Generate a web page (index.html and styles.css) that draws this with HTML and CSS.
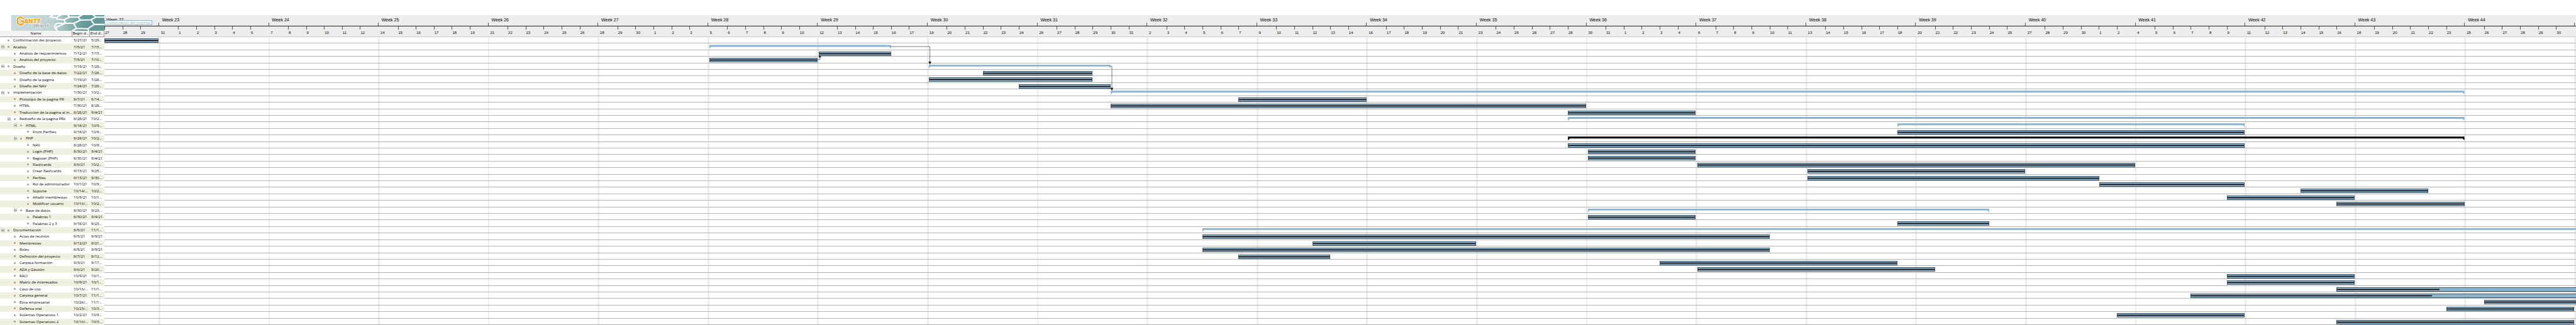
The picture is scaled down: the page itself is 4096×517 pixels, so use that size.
FILE: index.html
```html
<!DOCTYPE html>
<html lang="es">
<head>
<meta charset="utf-8">
<title>GanttProject</title>
<link rel="stylesheet" href="styles.css">
</head>
<body>
<main class="gantt">
  <section class="side">
    <svg class="logo" viewBox="0 0 283 47" preserveAspectRatio="none" role="img" aria-label="Gantt project">
      <defs>
        <linearGradient id="sea" x1="0" x2="1" y1="0" y2="0">
          <stop offset="0" stop-color="#c9dcdb"/>
          <stop offset="0.45" stop-color="#bdd3d2"/>
          <stop offset="0.78" stop-color="#669999"/>
          <stop offset="1" stop-color="#669999"/>
        </linearGradient>
      </defs>
      <rect width="283" height="47" fill="url(#sea)"/>
      <g fill="none" stroke="#fff" stroke-width="4" stroke-linejoin="round">
        <path d="M126 -1L118 6L138 8L142 4L152 -1M138 8V12L160 14L177 6L171 -1M177 6L203 6L216 -1M203 6L210 15L242 14L257 6L248 -1M257 6H284"/>
        <path d="M242 14L252 28H284M210 15L190 25L165 24L160 14M165 24L137 36L138 48M165 24L137 25L131 35L140 48M190 25L198 40L232 41L252 28M198 40L184 48M232 41L237 48"/>
      </g>
      <path d="M37 11L28 5L19 10V24L28 30L37 25V18H28" fill="none" stroke="#fff" stroke-width="7" stroke-linejoin="round"/>
      <path d="M37 11L28 5L19 10V24L28 30L37 25V18H28" fill="none" stroke="#ff9900" stroke-width="4" stroke-linejoin="round"/>
      <text class="logo-name" x="39" y="25">ANTT</text>
      <text class="logo-sub" x="69" y="35">project</text>
    </svg>
    <table class="tasks">
      <thead>
        <tr><th scope="col">Name</th><th scope="col">Begin d...</th><th scope="col">End d...</th></tr>
      </thead>
      <tbody id="task-rows"></tbody>
    </table>
  </section>
  <section class="chart">
    <header class="axis">
      <div class="weeks" id="weeks"></div>
      <div class="days" id="days"></div>
      <span class="tag">Conformación del proyecto</span>
    </header>
    <div class="plot">
      <div class="stripes" id="stripes"></div>
      <div class="bars" id="bars"></div>
      <svg class="links" viewBox="0 0 7551 880" preserveAspectRatio="none" aria-hidden="true">
        <path class="wire" d="M2403 29H2522V82M2179 69H2186V56M3074 89H3078V162"/>
        <path d="M2518 75H2526L2522 84ZM2182 62H2190L2186 56ZM3074 155H3082L3078 164Z"/>
      </svg>
    </div>
  </section>
</main>
<script src="gantt.js"></script>
</body>
</html>
```
FILE: styles.css
```css
* { box-sizing: border-box; }
body {
  margin: 0;
  background: #fff;
  color: #000;
  font-family: "Open Sans", "Noto Sans", sans-serif;
  font-size: 6px;
  line-height: 10px;
}
.gantt {
  display: grid;
  grid-template-columns: 166px 1fr;
  min-height: 100vh;
  padding-top: 24px;
}
.side, .chart {
  display: flex;
  flex-direction: column;
  min-width: 0;
}
.logo {
  display: block;
  width: 148px;
  height: 25px;
  margin-left: 18px;
}
.logo-name {
  font: bold 17px "DejaVu Sans", sans-serif;
  fill: #ff9900;
  stroke: #fff;
  stroke-width: 3px;
  paint-order: stroke;
}
.logo-sub {
  font: italic 16px "Liberation Serif", serif;
  fill: #666;
  stroke: #fff;
  stroke-width: 2px;
  paint-order: stroke;
}

.tasks {
  flex: 1;
  display: grid;
  grid-template-rows: 10px 1fr;
}
.tasks thead { display: grid; }
.tasks tbody {
  display: grid;
  grid-template-rows: repeat(44, 1fr);
}
.tasks tr {
  display: grid;
  grid-template-columns: 115px 28px 23px;
  align-items: center;
}
.tasks tbody tr:nth-child(even) { background: #eff0e0; }
.tasks th {
  padding: 0;
  height: 10px;
  line-height: 9px;
  background: #f3f3f3;
  border-right: 1px solid #999;
  border-bottom: 1px solid #999;
  font-weight: normal;
  white-space: nowrap;
}
.tasks td {
  padding: 0 0 0 2px;
  white-space: nowrap;
}
.tasks .name {
  display: flex;
  align-items: center;
}
.level-1 { margin-left: 10px; }
.level-2 { margin-left: 20px; }
.level-3 { margin-left: 31px; }
.toggle {
  width: 5px;
  height: 5px;
  margin-right: 5px;
  padding: 0;
  border: 1px solid #b4b4b4;
  background: linear-gradient(#fff 1px, #666 1px 2px, #fff 2px);
}
.toggle.leaf { visibility: hidden; }
.dot {
  width: 3px;
  height: 3px;
  margin-right: 6px;
  border-radius: 50%;
  background: #999;
}

.chart { overflow: hidden; }
.axis {
  position: relative;
  background: #ededed;
  border-bottom: 1px solid #ccc;
  font-family: "Liberation Sans", Arial, sans-serif;
}
.weeks, .days {
  display: flex;
  white-space: nowrap;
}
.weeks {
  height: 18px;
  border-bottom: 1px solid #222;
  font-size: 7px;
  line-height: 16px;
}
.days { height: 16px; }
.weeks > *, .days > *, .stripes > * { flex: none; }
.week { padding-left: 3px; }
.gap {
  height: 5px;
  align-self: flex-end;
  border-left: 1px solid #555;
}
.day {
  padding: 5px 0 0 1px;
  line-height: 10px;
  background: linear-gradient(#555, #555) left top / 1px 5px no-repeat;
}
.day.monday { background: none; }
.tag {
  position: absolute;
  left: 0;
  top: 8px;
  height: 8px;
  padding: 0 1px;
  border: 1px solid #8ab4cf;
  background: #fff;
  color: #8ab4cf;
  line-height: 6px;
  white-space: nowrap;
}

.plot {
  position: relative;
  flex: 1;
  display: grid;
}
.stripes, .links {
  position: absolute;
  inset: 0;
  width: 100%;
  height: 100%;
}
.stripes { display: flex; }
.sunday { background: #ededed; }
.bars {
  position: relative;
  display: grid;
  grid-template-rows: repeat(44, 1fr);
}
.row {
  padding-top: 2px;
  border-bottom: 1px solid #b4b4b4;
}
.bar {
  height: 7px;
  border: 1px solid #425663;
  background: #8ab4cf;
}
.done {
  height: 5px;
  background: linear-gradient(#8ab4cf 1px, #5c7889 1px 2px, #000 2px 3px, #5c7889 3px 4px, #8ab4cf 4px);
}
.summary {
  height: 6px;
  background: #8ab4cf;
  clip-path: polygon(0 0, 100% 0, 100% 100%, calc(100% - 3px) 50%, 3px 50%, 0 100%);
}
.summary.critical { background: #000; }
.wire {
  fill: none;
  stroke: #000;
}
```
FILE: gantt.js
```js
// Each task: level, name, begin label, end label, first day, last day, kind, percent done.
const tasks = [
  [0, "Conformación del proyecto", "5/27/21", "5/29...", "5/27", "5/29"],
  [0, "Analisis", "7/5/21", "7/15...", "7/5", "7/15", "summary"],
  [1, "Analisis de requerimientos", "7/12/21", "7/15...", "7/12", "7/15"],
  [1, "Analisis del proyecto", "7/5/21", "7/10...", "7/5", "7/10"],
  [0, "Diseño", "7/19/21", "7/29...", "7/19", "7/29", "summary"],
  [1, "Diseño de la base de datos", "7/22/21", "7/28...", "7/22", "7/28"],
  [1, "Diseño de la pagina", "7/19/21", "7/28...", "7/19", "7/28"],
  [1, "Diseño del NAV", "7/24/21", "7/29...", "7/24", "7/29"],
  [0, "Implementación", "7/30/21", "10/2...", "7/30", "10/23", "summary"],
  [1, "Prototipo de la pagina PR", "8/7/21", "8/14...", "8/7", "8/14"],
  [1, "HTML", "7/30/21", "8/28...", "7/30", "8/28"],
  [1, "Traduccion de la pagina al in...", "8/28/21", "9/4/21", "8/28", "9/4"],
  [1, "Rediseño de la pagina PRx", "8/28/21", "10/2...", "8/28", "10/23", "summary"],
  [2, "HTML", "9/18/21", "10/9...", "9/18", "10/9", "summary"],
  [3, "Front Perfiles", "9/18/21", "10/9...", "9/18", "10/9"],
  [2, "PHP", "8/28/21", "10/2...", "8/28", "10/23", "summary critical"],
  [3, "NAV", "8/28/21", "10/9...", "8/28", "10/9"],
  [3, "Login (PHP)", "8/30/21", "9/4/21", "8/30", "9/4"],
  [3, "Register (PHP)", "8/30/21", "9/4/21", "8/30", "9/4"],
  [3, "Flashcards", "9/6/21", "10/2...", "9/6", "10/2"],
  [3, "Crear flashcards", "9/13/21", "9/25...", "9/13", "9/25"],
  [3, "Perfiles", "9/13/21", "9/30...", "9/13", "9/30"],
  [3, "Rol de administrador", "10/1/21", "10/9...", "10/1", "10/9"],
  [3, "Soporte", "10/14/...", "10/2...", "10/14", "10/21"],
  [3, "Añadir membresias", "10/9/21", "10/1...", "10/9", "10/16"],
  [3, "Modificar usuario", "10/16/...", "10/2...", "10/16", "10/23"],
  [2, "Base de datos", "8/30/21", "9/23...", "8/30", "9/23", "summary"],
  [3, "Palabras 1", "8/30/21", "9/4/21", "8/30", "9/4"],
  [3, "Palabras 2 y 3", "9/18/21", "9/23...", "9/18", "9/23"],
  [0, "Documentación", "8/5/21", "11/1...", "8/5", "11/13", "summary"],
  [1, "Actas de reunión", "8/5/21", "9/9/21", "8/5", "9/9"],
  [1, "Membresias", "8/12/21", "8/21...", "8/12", "8/21"],
  [1, "Roles", "8/5/21", "9/9/21", "8/5", "9/9"],
  [1, "Definición del proyecto", "8/7/21", "8/12...", "8/7", "8/12"],
  [1, "Carpeta formación", "9/3/21", "9/17...", "9/3", "9/17"],
  [1, "ADA y Gestión", "9/6/21", "9/20...", "9/6", "9/20"],
  [1, "RACI", "10/9/21", "10/1...", "10/9", "10/16"],
  [1, "Matriz de interesados", "10/9/21", "10/1...", "10/9", "10/16"],
  [1, "Caso de uso", "10/16/...", "11/1...", "10/16", "11/13", "", 22.4],
  [1, "Carpeta general", "10/7/21", "11/1...", "10/7", "11/13", "", 40],
  [1, "Etica empresarial", "10/26/...", "11/1...", "10/26", "11/13"],
  [1, "Defensa oral", "10/23/...", "10/3...", "10/23", "10/30"],
  [1, "Sistemas Operativos 1", "10/2/21", "10/9...", "10/2", "10/9"],
  [1, "Sistemas Operativos 2", "10/16/...", "10/3...", "10/16", "10/30"]
];

// Sundays are collapsed to a narrow stripe; the timeline spans 7551 units.
const SPAN = 7551;
const WORKDAY = 55.03;
const SUNDAY = 5.3;
const pct = (units) => (units / SPAN * 100).toFixed(4) + "%";
const at = (text) => {
  const [m, d] = text.split("/").map(Number);
  return new Date(2021, m - 1, d, 12);
};
const next = (date) => new Date(date.getFullYear(), date.getMonth(), date.getDate() + 1, 12);
const widthOf = (date) => (date.getDay() === 0 ? SUNDAY : WORKDAY);
const first = at("5/27");
const offset = (date) => {
  let x = 0;
  for (let d = first; d < date; d = next(d)) x += widthOf(d);
  return x;
};

// Time axis
let weeks = "", days = "", stripes = "";
let week = 22, run = 0;
const last = at("10/31");
for (let d = first; d <= last; d = next(d)) {
  if (d.getDay() === 0) {
    weeks += `<span class="week" style="width:${pct(run)}">Week ${week}</span><i class="gap" style="width:${pct(SUNDAY)}"></i>`;
    days += `<i style="width:${pct(SUNDAY)}"></i>`;
    stripes += `<i style="width:${pct(run)}"></i><i class="sunday" style="width:${pct(SUNDAY)}"></i>`;
    week += 1;
    run = 0;
  } else {
    const monday = d.getDay() === 1 ? " monday" : "";
    days += `<span class="day${monday}" style="width:${pct(WORKDAY)}">${d.getDate()}</span>`;
    run += WORKDAY;
  }
}
document.getElementById("weeks").innerHTML = weeks;
document.getElementById("days").innerHTML = days;
document.getElementById("stripes").innerHTML = stripes;

// Task table and bars
let rows = "", bars = "";
for (const [level, name, begin, end, from, to, kind = "", done = 100] of tasks) {
  const leaf = kind ? "" : " leaf";
  rows += `<tr><td class="name level-${level}"><button class="toggle${leaf}" type="button" aria-label="Contraer ${name}"></button><i class="dot"></i>${name}</td><td>${begin}</td><td>${end}</td></tr>`;
  const x = offset(at(from));
  const w = offset(next(at(to))) - x;
  const box = `style="margin-left:${pct(x)};width:${pct(w)}"`;
  bars += kind
    ? `<div class="row"><div class="${kind}" ${box}></div></div>`
    : `<div class="row"><div class="bar" ${box}><div class="done" style="width:${done}%"></div></div></div>`;
}
document.getElementById("task-rows").innerHTML = rows;
document.getElementById("bars").innerHTML = bars;
```
